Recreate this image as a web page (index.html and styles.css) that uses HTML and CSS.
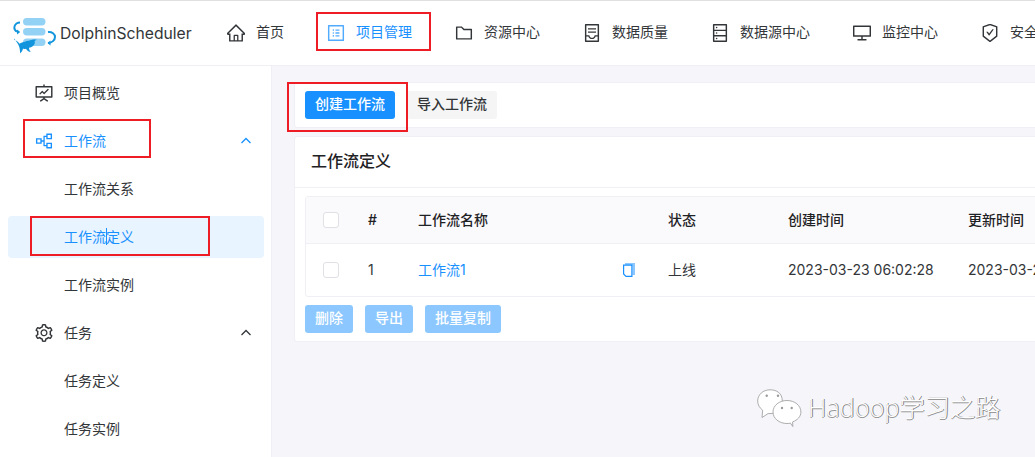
FILE: index.html
```html
<!DOCTYPE html>
<html lang="zh">
<head>
<meta charset="utf-8">
<title>DolphinScheduler</title>
<link rel="stylesheet" href="styles.css">
</head>
<body>
<div class="app">
  <header class="topbar">
    <div class="logo">
      <svg class="logo-mark" viewBox="0 0 60 60" width="60" height="60" aria-hidden="true">
        <rect x="23" y="15" width="22.5" height="7.5" rx="3.7" fill="#93d2f5"/>
        <rect x="23" y="25" width="22.5" height="7.5" rx="3.7" fill="#93d2f5"/>
        <rect x="23" y="35.5" width="22.5" height="7.5" rx="3.7" fill="#93d2f5"/>
        <path d="M20 19.5c-1.500 0-2.500.4-3.500 1-3 2.200-3 6.500.5 8.200" fill="none" stroke="#1295dc" stroke-width="2"/>
        <path d="M17 26.500l3.200 2.500-3.200 2.500z" fill="#1295dc"/>
        <path d="M48 29c4-.5 7 2 7 5s-3 6-7 6" fill="none" stroke="#1295dc" stroke-width="2"/>
        <path d="M50.500 37.500l-3 2.500 3 2.500z" fill="#1295dc"/>
        <path d="M14 36.500c2 .5 4.500 2.500 5.500 4.200 1.500-1 3.500-1.700 5.500-2 1-.8 2.500-1.200 4-1 1.200-.7 4-1.500 7.700-1.200-1 .8-1.800 1.400-2.200 2 .7 1 .3 2.500-.8 3.700-1.200 1.300-3 2.200-4.700 2.500 0 1.500.6 3 1.800 4.300-2-.3-3.800-1.600-4.800-3.300-1 .3-2 .3-3 .1-.5 1.800-1.200 3.200-2.800 4.700-.2-2.500-.3-4.800-1.200-7.300-1-2.700-2.800-4.800-4.800-7.700z" fill="#1295dc"/>
      </svg>
      <span class="logo-text">DolphinScheduler</span>
    </div>
    <nav class="nav">
      <a class="nav-item"><svg class="ic" viewBox="64 64 896 896"><path d="M946.5 505L560.1 118.8l-25.9-25.9a31.5 31.5 0 0 0-44.4 0L77.5 505a63.9 63.9 0 0 0-18.8 46c.4 35.2 29.7 63.3 64.9 63.3h42.5V940h691.8V614.3h43.4c17.1 0 33.2-6.7 45.3-18.8a63.6 63.6 0 0 0 18.7-45.3c0-17-6.7-33.1-18.8-45.2zM568 868H456V664h112v204zm217.9-325.7V868H632V640c0-22.1-17.9-40-40-40H432c-22.1 0-40 17.9-40 40v228H238.1V542.3h-96l370-369.7 23.1 23.1L882 542.3h-96.1z"/></svg><span class="label">首页</span></a>
      <a class="nav-item active"><svg class="ic" viewBox="64 64 896 896"><path d="M880 112H144c-17.7 0-32 14.3-32 32v736c0 17.7 14.3 32 32 32h736c17.7 0 32-14.3 32-32V144c0-17.7-14.3-32-32-32zm-40 728H184V184h656v656zM492 400h184c4.4 0 8-3.6 8-8v-48c0-4.4-3.6-8-8-8H492c-4.4 0-8 3.6-8 8v48c0 4.4 3.6 8 8 8zm0 144h184c4.4 0 8-3.6 8-8v-48c0-4.4-3.6-8-8-8H492c-4.4 0-8 3.6-8 8v48c0 4.4 3.6 8 8 8zm0 144h184c4.4 0 8-3.6 8-8v-48c0-4.4-3.6-8-8-8H492c-4.4 0-8 3.6-8 8v48c0 4.4 3.6 8 8 8zM340 368a40 40 0 1 0 80 0 40 40 0 1 0-80 0zm0 144a40 40 0 1 0 80 0 40 40 0 1 0-80 0zm0 144a40 40 0 1 0 80 0 40 40 0 1 0-80 0z"/></svg><span class="label">项目管理</span></a>
      <a class="nav-item"><svg class="ic" viewBox="64 64 896 896"><path d="M880 298.4H521L403.7 186.2a8.15 8.15 0 0 0-5.5-2.2H144c-17.7 0-32 14.3-32 32v592c0 17.7 14.3 32 32 32h736c17.7 0 32-14.3 32-32V330.4c0-17.7-14.3-32-32-32zM840 768H184V256h188.5l119.6 114.4H840V768z"/></svg><span class="label">资源中心</span></a>
      <a class="nav-item"><svg class="ic" viewBox="64 64 896 896"><path d="M832 64H192c-17.7 0-32 14.3-32 32v832c0 17.7 14.3 32 32 32h640c17.7 0 32-14.3 32-32V96c0-17.7-14.3-32-32-32zm-40 824H232V687h97.9c11.6 32.8 32 62.3 59.1 84.7 34.5 28.5 78.2 44.3 123 44.3s88.5-15.7 123-44.3c27.1-22.4 47.5-51.9 59.1-84.7H792v201zm0-264H643.6l-5.2 24.7C626.4 708.5 573.2 752 512 752s-114.4-43.5-126.5-103.3l-5.2-24.7H232V136h560v488zM320 341h384c4.4 0 8-3.6 8-8v-48c0-4.4-3.6-8-8-8H320c-4.4 0-8 3.6-8 8v48c0 4.4 3.6 8 8 8zm0 160h384c4.4 0 8-3.6 8-8v-48c0-4.4-3.6-8-8-8H320c-4.4 0-8 3.6-8 8v48c0 4.4 3.6 8 8 8z"/></svg><span class="label">数据质量</span></a>
      <a class="nav-item"><svg class="ic" viewBox="64 64 896 896"><path d="M832 64H192c-17.7 0-32 14.3-32 32v832c0 17.7 14.3 32 32 32h640c17.7 0 32-14.3 32-32V96c0-17.7-14.3-32-32-32zm-600 72h560v208H232V136zm560 480H232V408h560v208zm0 272H232V680h560v208zM304 240a40 40 0 1 0 80 0 40 40 0 1 0-80 0zm0 272a40 40 0 1 0 80 0 40 40 0 1 0-80 0zm0 272a40 40 0 1 0 80 0 40 40 0 1 0-80 0z"/></svg><span class="label">数据源中心</span></a>
      <a class="nav-item"><svg class="ic" viewBox="64 64 896 896"><path d="M928 140H96c-17.7 0-32 14.3-32 32v496c0 17.7 14.3 32 32 32h380v112H304c-8.8 0-16 7.2-16 16v48c0 4.4 3.6 8 8 8h432c4.4 0 8-3.6 8-8v-48c0-8.8-7.200-16-16-16H548V700h380c17.7 0 32-14.3 32-32V172c0-17.7-14.3-32-32-32zm-40 488H136V212h752v416z"/></svg><span class="label">监控中心</span></a>
      <a class="nav-item"><svg class="ic" viewBox="64 64 896 896"><path d="M866.9 169.9L527.1 54.1C523 52.7 517.5 52 512 52s-11 .7-15.1 2.1L157.1 169.9c-8.3 2.8-15.1 12.4-15.1 21.2v482.4c0 8.8 5.7 20.4 12.6 25.9L499.3 968c3.5 2.7 8 4.1 12.6 4.1s9.2-1.4 12.6-4.1l344.7-268.6c6.9-5.4 12.6-17 12.6-25.9V191.1c.2-8.8-6.6-18.3-14.9-21.2zM810 654.3L512 886.5 214 654.3V226.7l298-101.6 298 101.6v427.6zm-405.8-201c-3-4.1-7.8-6.6-13-6.6H336c-6.5 0-10.3 7.4-6.5 12.7l126.4 174a16.1 16.1 0 0 0 26 0l212.6-292.7c3.8-5.3 0-12.7-6.5-12.7h-55.2c-5.1 0-10 2.5-13 6.6L468.9 542.4l-64.7-89.1z"/></svg><span class="label">安全中心</span></a>
    </nav>
  </header>
  <div class="body">
    <aside class="sidebar">
      <a class="side-item"><svg class="ic" viewBox="64 64 896 896"><path d="M312.1 591.5c3.1 3.1 8.2 3.1 11.3 0l101.8-101.8 86.1 86.2c3.1 3.1 8.2 3.1 11.3 0l226.3-226.5c3.1-3.1 3.1-8.2 0-11.3l-36.8-36.8a8.03 8.03 0 0 0-11.3 0L517 485.3l-86.1-86.2a8.03 8.03 0 0 0-11.3 0L275.3 543.4a8.03 8.03 0 0 0 0 11.3l36.8 36.8z"/><path d="M904 160H548V96c0-4.4-3.6-8-8-8h-56c-4.4 0-8 3.6-8 8v64H120c-17.7 0-32 14.3-32 32v520c0 17.7 14.3 32 32 32h356.4v32L311.6 884.1a7.92 7.92 0 0 0-2.3 11l30.3 47.2v.1c2.4 3.7 7.4 4.7 11.1 2.3L512 838.9l161.3 105.8c3.7 2.4 8.7 1.4 11.1-2.3v-.1l30.3-47.2a8 8 0 0 0-2.3-11L548 776.3V744h356c17.7 0 32-14.3 32-32V192c0-17.7-14.3-32-32-32zm-40 512H160V232h704v440z"/></svg><span class="label">项目概览</span></a>
      <a class="side-item blue"><svg class="ic" viewBox="64 64 896 896"><path d="M640.6 429.8h257.1c7.9 0 14.3-6.4 14.3-14.3V158.3c0-7.9-6.4-14.3-14.3-14.3H640.6c-7.9 0-14.3 6.4-14.3 14.3v92.9H490.6c-3.9 0-7.1 3.2-7.1 7.1v221.500h-85.7v-96.5c0-7.9-6.4-14.3-14.3-14.3H126.3c-7.9 0-14.3 6.4-14.3 14.3v257.2c0 7.9 6.4 14.3 14.3 14.3h257.1c7.9 0 14.3-6.4 14.3-14.3V544h85.7v221.5c0 3.9 3.2 7.1 7.1 7.1h135.7v92.9c0 7.9 6.4 14.3 14.3 14.3h257.1c7.9 0 14.3-6.4 14.3-14.3v-257c0-7.9-6.4-14.3-14.3-14.3h-257c-7.9 0-14.3 6.4-14.3 14.3v100h-78.6v-393h78.6v92.9c0 7.9 6.4 14.3 14.3 14.3zm53.5-217.9h150V362h-150V211.9zM329.9 587h-150V437h150v150zm364.2 75.1h150v150.1h-150V662.1z"/></svg><span class="label">工作流</span><svg class="chev" viewBox="0 0 12 12"><path d="M1.500 8L6 3.500 10.500 8"/></svg></a>
      <a class="side-item sub"><span class="label">工作流关系</span></a>
      <a class="side-item sub current"><span class="label">工作流定义</span><span class="caret"></span></a>
      <a class="side-item sub"><span class="label">工作流实例</span></a>
      <a class="side-item"><svg class="ic" viewBox="64 64 896 896"><path d="M924.8 625.7l-65.5-56c3.1-19 4.7-38.4 4.7-57.8s-1.6-38.8-4.7-57.8l65.5-56a32.03 32.03 0 0 0 9.3-35.2l-.9-2.6a443.74 443.74 0 0 0-79.7-137.9l-1.8-2.1a32.12 32.12 0 0 0-35.1-9.5l-81.3 28.9c-30-24.6-63.5-44-99.7-57.6l-15.7-85a32.05 32.05 0 0 0-25.8-25.7l-2.7-.5c-52.1-9.4-106.9-9.4-159 0l-2.7.5a32.05 32.05 0 0 0-25.8 25.7l-15.8 85.4a351.86 351.86 0 0 0-99 57.4l-81.9-29.1a32 32 0 0 0-35.1 9.5l-1.8 2.1a446.02 446.02 0 0 0-79.7 137.9l-.9 2.6c-4.5 12.5-.8 26.5 9.3 35.2l66.3 56.6c-3.1 18.8-4.6 38-4.6 57.1 0 19.2 1.5 38.4 4.6 57.1L99 625.5a32.03 32.03 0 0 0-9.3 35.2l.9 2.6c18.1 50.4 44.9 96.9 79.7 137.9l1.8 2.1a32.12 32.12 0 0 0 35.1 9.5l81.9-29.1c29.8 24.5 63.1 43.9 99 57.4l15.8 85.4a32.05 32.05 0 0 0 25.8 25.7l2.7.5a449.4 449.4 0 0 0 159 0l2.7-.5a32.05 32.05 0 0 0 25.8-25.7l15.7-85a350 350 0 0 0 99.7-57.6l81.3 28.9a32 32 0 0 0 35.1-9.5l1.8-2.1c34.8-41.1 61.6-87.5 79.7-137.9l.9-2.6c4.5-12.3.8-26.3-9.3-35zM788.3 465.9c2.5 15.1 3.8 30.6 3.8 46.1s-1.3 31-3.8 46.1l-6.6 40.1 74.7 63.9a370.03 370.03 0 0 1-42.6 73.6L721 702.8l-31.4 25.8c-23.9 19.6-50.5 35-79.3 45.8l-38.1 14.3-17.9 97a377.5 377.5 0 0 1-85 0l-17.9-97.2-37.8-14.5c-28.5-10.8-55-26.2-78.7-45.7l-31.4-25.9-93.4 33.2c-17-22.9-31.2-47.6-42.6-73.6l75.5-64.5-6.5-40c-2.4-14.9-3.7-30.3-3.7-45.5 0-15.3 1.2-30.6 3.7-45.5l6.5-40-75.5-64.5c11.3-26.1 25.6-50.7 42.6-73.6l93.4 33.2 31.4-25.9c23.7-19.5 50.2-34.9 78.7-45.7l37.9-14.3 17.9-97.2c28.1-3.2 56.8-3.2 85 0l17.9 97 38.1 14.3c28.7 10.8 55.4 26.2 79.3 45.8l31.4 25.8 92.8-32.9c17 22.9 31.2 47.6 42.6 73.6L781.8 426l6.5 39.9zM512 326c-97.2 0-176 78.8-176 176s78.8 176 176 176 176-78.8 176-176-78.8-176-176-176zm79.2 255.2A111.6 111.6 0 0 1 512 614c-29.9 0-58-11.7-79.2-32.8A111.6 111.6 0 0 1 400 502c0-29.9 11.7-58 32.8-79.2C454 401.6 482.1 390 512 390c29.9 0 58 11.6 79.2 32.8A111.6 111.6 0 0 1 624 502c0 29.9-11.7 58-32.8 79.2z"/></svg><span class="label">任务</span><svg class="chev" viewBox="0 0 12 12"><path d="M1.500 8L6 3.500 10.500 8"/></svg></a>
      <a class="side-item sub"><span class="label">任务定义</span></a>
      <a class="side-item sub"><span class="label">任务实例</span></a>
    </aside>
    <main class="main">
      <section class="card toolbar">
        <button class="btn primary">创建工作流</button>
        <button class="btn plain">导入工作流</button>
      </section>
      <section class="card panel">
        <h2 class="panel-title">工作流定义</h2>
        <div class="panel-body">
          <table class="grid">
            <colgroup>
              <col class="c-check"><col class="c-num"><col class="c-name"><col class="c-state"><col class="c-time"><col>
            </colgroup>
            <thead>
              <tr>
                <th class="check-cell"><span class="check"></span></th>
                <th>#</th>
                <th>工作流名称</th>
                <th>状态</th>
                <th>创建时间</th>
                <th>更新时间</th>
              </tr>
            </thead>
            <tbody>
              <tr>
                <td class="check-cell"><span class="check"></span></td>
                <td>1</td>
                <td>
                  <div class="name-cell">
                    <a class="link">工作流1</a>
                    <svg class="copy" viewBox="0 0 12 14" aria-hidden="true"><path class="copy-back" d="M2 0h10v12h-2.500V2.500H2z"/><path class="copy-front" d="M.6 2.100h8.300v11.300H3L.6 11z"/></svg>
                  </div>
                </td>
                <td>上线</td>
                <td>2023-03-23 06:02:28</td>
                <td>2023-03-23 06:02:28</td>
              </tr>
            </tbody>
          </table>
          <div class="batch">
            <button class="btn off">删除</button>
            <button class="btn off">导出</button>
            <button class="btn off">批量复制</button>
          </div>
        </div>
      </section>
    </main>
  </div>
  <div class="mark mark-nav"></div>
  <div class="mark mark-create"></div>
  <div class="mark mark-flow"></div>
  <div class="mark mark-def"></div>
  <div class="watermark">
    <svg class="wx" viewBox="0 0 46 38" width="46" height="38" aria-hidden="true">
      <path class="wx-b" d="M13 .8C6 .8.7 5.700.7 12c0 3.900 2 7 5 9.200L5 28.500l6.200-4c.6.1 1.200.1 1.800.1 7 0 12.300-5 12.300-12.600S20 .8 13 .8z"/>
      <path class="wx-b" d="M30 11.500c-7.800 0-14 5-14 11.500s6.200 11.500 14 11.500c1.200 0 2.300-.1 3.400-.4l2.400 3.400-.2-4.600c5-1.900 8.300-5.400 8.300-9.900 0-6.500-6.200-11.500-13.900-11.500z"/>
      <circle class="wx-d" cx="9.700" cy="6.700" r="1.200"/><circle class="wx-d" cx="21" cy="6.700" r="1.200"/>
      <circle class="wx-d" cx="25" cy="19" r="1.200"/><circle class="wx-d" cx="34.700" cy="19" r="1.200"/>
    </svg>
    <span class="wm-text">Hadoop学习之路</span>
  </div>
</div>
</body>
</html>
```
FILE: styles.css
```css
* { box-sizing: border-box; }
html, body { margin: 0; height: 100%; overflow: hidden; }
body {
  font-family: Inter, "Noto Sans CJK SC", "Noto Sans", sans-serif;
  font-size: 14px;
  color: #333639;
  background: #fff;
}
.app { position: relative; width: 1035px; height: 457px; overflow: hidden; display: flex; flex-direction: column; border-top: 1px solid #e0e0e0; }
.topbar { flex: none; height: 65px; display: flex; align-items: center; border-bottom: 1px solid #efeff5; background: #fff; white-space: nowrap; }
.logo { flex: none; width: 227px; display: flex; align-items: center; height: 64px; }
.logo-mark { flex: none; margin-top: -1px; }
.logo-text { font-size: 15.7px; color: #333639; margin-top: 1px; }
.nav { display: flex; gap: 43px; align-items: center; }
.nav-item { display: flex; align-items: center; gap: 11px; line-height: 20px; color: #333639; }
.nav-item.active { color: #1890ff; }
.label { padding-bottom: 2px; white-space: nowrap; }
.ic { flex: none; width: 18px; height: 18px; fill: currentColor; }
.nav-item.active .ic { fill: #1890ff; opacity: .75; }
.body { flex: 1; min-height: 0; display: flex; }
.sidebar { flex: none; width: 272px; border-right: 1px solid #efeff5; padding: 6px 7px 0 8px; display: flex; flex-direction: column; gap: 6px; background: #fff; }
.side-item { flex: none; height: 42px; display: flex; align-items: center; gap: 11px; padding-left: 27px; padding-right: 12px; border-radius: 4px; color: #333639; }
.side-item.blue, .side-item.current { color: #1890ff; }
.side-item.sub { padding-left: 56px; gap: 0; }
.side-item.current { background: #e8f4ff; position: relative; }
.caret { position: absolute; left: 98px; top: 12px; width: 1px; height: 17px; background: #1890ff; }
.chev { width: 12px; height: 12px; margin-left: auto; fill: none; stroke: currentColor; stroke-width: 1.300; }
.main { flex: 1; min-width: 0; background: #f5f5fa; padding: 16px 0 0 22px; display: flex; flex-direction: column; gap: 8px; overflow: hidden; }
.card { flex: none; width: 1000px; background: #fff; border: 1px solid #efeff5; border-radius: 3px; }
.toolbar { height: 46px; display: flex; align-items: center; gap: 12px; padding: 0 10px; }
.btn { border: 0; height: 28px; padding: 0 10px 2px; border-radius: 3px; font: inherit; font-weight: 500; white-space: nowrap; line-height: 26px; }
.primary { background: #1890ff; color: #fff; }
.plain { background: #f5f5f5; color: #333639; }
.off { background: #8cc8ff; color: #fff; }
.panel-title { margin: 0; height: 51px; padding: 0 16px; font-size: 16px; font-weight: 500; line-height: 48px; border-bottom: 1px solid #efeff5; color: #1f2225; }
.panel-body { padding: 8px 10px 8px; }
.grid { width: 100%; table-layout: fixed; border-collapse: separate; border-spacing: 0; border: 1px solid #efeff5; border-radius: 3px; }
.c-check { width: 46px; }
.c-num { width: 50px; }
.c-name { width: 250px; }
.c-state { width: 120px; }
.c-time { width: 180px; }
.grid th, .grid td { text-align: left; padding: 0 16px; line-height: 20px; white-space: nowrap; overflow: hidden; }
.grid th { height: 47px; background: #fafafc; font-weight: 500; color: #1f2225; border-bottom: 1px solid #efeff5; }
.grid td { height: 52px; color: #333639; }
.grid .check-cell { padding: 0 0 0 17px; }
.check { display: block; width: 16px; height: 16px; border: 1px solid #e0e0e6; border-radius: 3px; background: #fff; }
.name-cell { display: flex; align-items: center; justify-content: space-between; padding-right: 1px; }
.link { color: #1890ff; }
.copy { flex: none; width: 12px; height: 14px; }
.copy-back { fill: #8cc8ff; }
.copy-front { fill: #fff; stroke: #1890ff; stroke-width: 1.200; }
.batch { display: flex; gap: 12px; margin-top: 8px; }
.mark { position: absolute; border: 2px solid #ee1c25; pointer-events: none; }
.mark-nav { left: 316px; top: 11px; width: 115px; height: 39px; }
.mark-create { left: 287px; top: 81px; width: 121px; height: 50px; }
.mark-flow { left: 23px; top: 118px; width: 128px; height: 39px; }
.mark-def { left: 30px; top: 215px; width: 180px; height: 40px; }
.watermark { position: absolute; left: 757px; top: 388px; display: flex; align-items: center; gap: 5px; pointer-events: none; }
.wx-b { fill: #fff; stroke: #999; stroke-width: .8; }
.wx-d { fill: #9a9a9a; }
.wm-text { font-family: "Open Sans", "Noto Sans CJK SC", sans-serif; font-size: 25.3px; font-weight: 300; color: #fff; text-shadow: 1px 0 0 #808080, 0 1px 0 #999; line-height: 34px; padding-bottom: 3px; }
```
